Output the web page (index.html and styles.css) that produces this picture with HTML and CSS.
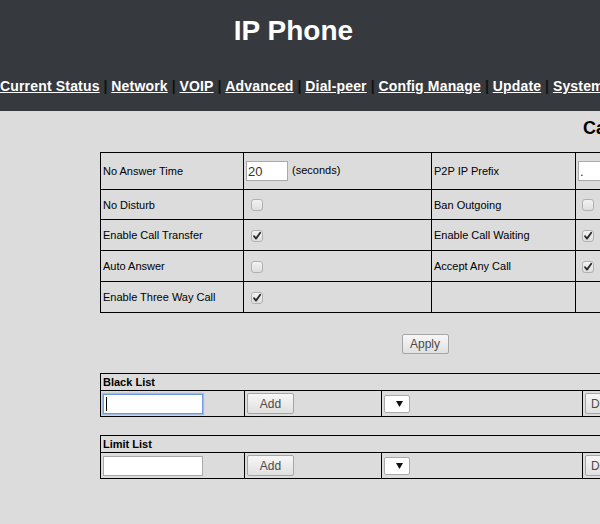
FILE: index.html
```html
<!DOCTYPE html>
<html>
<head>
<meta charset="utf-8">
<title>IP Phone</title>
<link rel="stylesheet" href="styles.css">
</head>
<body>
<div class="header">
  <h1 class="brand">IP Phone</h1>
  <div class="nav"><a href="#">Current Status</a> <span class="sep">|</span> <a href="#">Network</a> <span class="sep">|</span> <a href="#">VOIP</a> <span class="sep">|</span> <a href="#">Advanced</a> <span class="sep">|</span> <a href="#">Dial-peer</a> <span class="sep">|</span> <a href="#">Config Manage</a> <span class="sep">|</span> <a href="#">Update</a> <span class="sep">|</span> <a href="#">System</a> <span class="sep">|</span> <a href="#">Logout</a></div>
</div>
<div class="main">
  <h2 class="title">Call Settings</h2>
  <table class="grid settings">
    <colgroup><col class="c1"><col class="c2"><col class="c3"><col class="c4"></colgroup>
    <tr class="r1">
      <td>No Answer Time</td>
      <td><input class="txt short" type="text" value="20"> (seconds)</td>
      <td>P2P IP Prefix</td>
      <td><input class="txt prefix" type="text" value="."></td>
    </tr>
    <tr class="r2">
      <td>No Disturb</td>
      <td><span class="cb"></span></td>
      <td>Ban Outgoing</td>
      <td><span class="cb right"></span></td>
    </tr>
    <tr class="r3">
      <td>Enable Call Transfer</td>
      <td><span class="cb"><svg viewBox="0 0 12 12" width="12" height="12"><path d="M3 6.2 L5 8.6 L9.2 2.8" fill="none" stroke="#2a2a2a" stroke-width="1.8" stroke-linecap="round" stroke-linejoin="round"/></svg></span></td>
      <td>Enable Call Waiting</td>
      <td><span class="cb right"><svg viewBox="0 0 12 12" width="12" height="12"><path d="M3 6.2 L5 8.6 L9.2 2.8" fill="none" stroke="#2a2a2a" stroke-width="1.8" stroke-linecap="round" stroke-linejoin="round"/></svg></span></td>
    </tr>
    <tr class="r3">
      <td>Auto Answer</td>
      <td><span class="cb"></span></td>
      <td>Accept Any Call</td>
      <td><span class="cb right"><svg viewBox="0 0 12 12" width="12" height="12"><path d="M3 6.2 L5 8.6 L9.2 2.8" fill="none" stroke="#2a2a2a" stroke-width="1.8" stroke-linecap="round" stroke-linejoin="round"/></svg></span></td>
    </tr>
    <tr class="r3">
      <td>Enable Three Way Call</td>
      <td><span class="cb"><svg viewBox="0 0 12 12" width="12" height="12"><path d="M3 6.2 L5 8.6 L9.2 2.8" fill="none" stroke="#2a2a2a" stroke-width="1.8" stroke-linecap="round" stroke-linejoin="round"/></svg></span></td>
      <td></td>
      <td></td>
    </tr>
  </table>
  <div class="actions"><button class="btn apply" type="button">Apply</button></div>

  <table class="grid list">
    <colgroup><col class="l1"><col class="l2"><col class="l3"><col class="l4"></colgroup>
    <tr class="head"><td colspan="4">Black List</td></tr>
    <tr class="row">
      <td><span class="focuswrap"><input class="txt long focused" type="text"></span></td>
      <td><button class="btn add" type="button">Add</button></td>
      <td><span class="select"><svg viewBox="0 0 7 6" width="7" height="6"><path d="M0 0 H7 L3.5 6 Z" fill="#111"/></svg></span></td>
      <td><button class="btn del" type="button">Delete</button></td>
    </tr>
  </table>

  <table class="grid list second">
    <colgroup><col class="l1"><col class="l2"><col class="l3"><col class="l4"></colgroup>
    <tr class="head"><td colspan="4">Limit List</td></tr>
    <tr class="row">
      <td><input class="txt long" type="text"></td>
      <td><button class="btn add" type="button">Add</button></td>
      <td><span class="select"><svg viewBox="0 0 7 6" width="7" height="6"><path d="M0 0 H7 L3.5 6 Z" fill="#111"/></svg></span></td>
      <td><button class="btn del" type="button">Delete</button></td>
    </tr>
  </table>
</div>
</body>
</html>
```

FILE: styles.css
```css
html, body {
  margin: 0;
  padding: 0;
}
body {
  background: #dcdcdc;
  font-family: "Liberation Sans", Arial, sans-serif;
  color: #000;
  overflow: hidden;
  width: 600px;
  height: 524px;
}
.header {
  background: #36393d;
  height: 111px;
  overflow: hidden;
}
.brand {
  margin: 0;
  padding: 15px 13px 0 0;
  font-size: 28px;
  line-height: 32px;
  font-weight: bold;
  color: #fff;
  text-align: center;
}
.nav {
  margin-top: 31px;
  white-space: nowrap;
  font-size: 14px;
  line-height: 16px;
  font-weight: bold;
  color: #111;
}
.nav a {
  color: #fff;
  text-decoration: underline;
  letter-spacing: 0.17px;
}
.sep {
  color: #111;
}
.main {
  width: 1280px;
}
.title {
  margin: 7px 0 0 0;
  padding-left: 583px;
  font-size: 18px;
  line-height: 21px;
  font-weight: bold;
  white-space: nowrap;
}
.grid {
  border-collapse: collapse;
  table-layout: fixed;
  margin-left: 100px;
  font-size: 11px;
}
.grid td {
  border: 1px solid #000;
  padding: 0 2px;
  vertical-align: middle;
  white-space: nowrap;
  overflow: hidden;
}
.settings {
  margin-top: 13px;
  width: 675px;
}
.c1 { width: 143px; }
.c2 { width: 188px; }
.c3 { width: 144px; }
.c4 { width: 200px; }
.r1 td { height: 36px; }
.r2 td { height: 29px; }
.r3 td { height: 30px; }
.txt {
  box-sizing: border-box;
  height: 20px;
  border: 1px solid #a9a9a9;
  background: #fff;
  font-family: "Liberation Sans", Arial, sans-serif;
  font-size: 13px;
  color: #333;
  padding: 0 1px;
  margin: 0;
  vertical-align: middle;
  outline: none;
}
.short {
  width: 42px;
  margin-right: 1px;
}
.prefix {
  width: 100px;
  margin-left: 0;
}
.cb {
  display: inline-block;
  box-sizing: border-box;
  width: 12px;
  height: 12px;
  margin-left: 5px;
  border: 1px solid #b1b1b1;
  border-radius: 3px;
  background: linear-gradient(#f2f2f2, #dedede);
  vertical-align: middle;
  position: relative;
}
.cb.right {
  margin-left: 4px;
}
.cb svg {
  display: block;
  margin: -1px 0 0 -1px;
}
.actions {
  width: 650px;
  margin-left: 100px;
  margin-top: 21px;
  text-align: center;
  font-size: 0;
}
.btn {
  box-sizing: border-box;
  border: 1px solid #a6a6a6;
  border-radius: 2px;
  background: linear-gradient(#f7f7f7, #e0e0e0);
  font-family: "Liberation Sans", Arial, sans-serif;
  font-size: 12px;
  color: #4a4a4a;
  padding: 0;
  margin: 0;
  vertical-align: middle;
}
.apply {
  width: 47px;
  height: 20px;
}
.list {
  margin-top: 19px;
  width: 682px;
}
.second {
  margin-top: 18px;
}
.l1 { width: 144px; }
.l2 { width: 137px; }
.l3 { width: 201px; }
.l4 { width: 200px; }
.list .head td {
  height: 16px;
  font-weight: bold;
  padding: 0 2px;
}
.list .row td {
  height: 25px;
}
.long {
  width: 100px;
}
.focuswrap {
  position: relative;
  display: inline-block;
  vertical-align: middle;
}
.focuswrap::after {
  content: "";
  position: absolute;
  left: 3px;
  top: 3px;
  width: 1px;
  height: 14px;
  background: #000;
}
.focused {
  border-color: #6f9be0;
  box-shadow: 0 0 1px 1px rgba(110, 160, 230, 0.55);
  display: block;
}
.add {
  width: 47px;
  height: 21px;
}
.select {
  display: inline-flex;
  box-sizing: border-box;
  width: 26px;
  height: 18px;
  border: 1px solid #aaa;
  border-radius: 2px;
  background: #fff;
  align-items: center;
  justify-content: flex-end;
  padding-right: 6px;
  vertical-align: middle;
}
.del {
  height: 21px;
  padding: 0 5px;
}
```
